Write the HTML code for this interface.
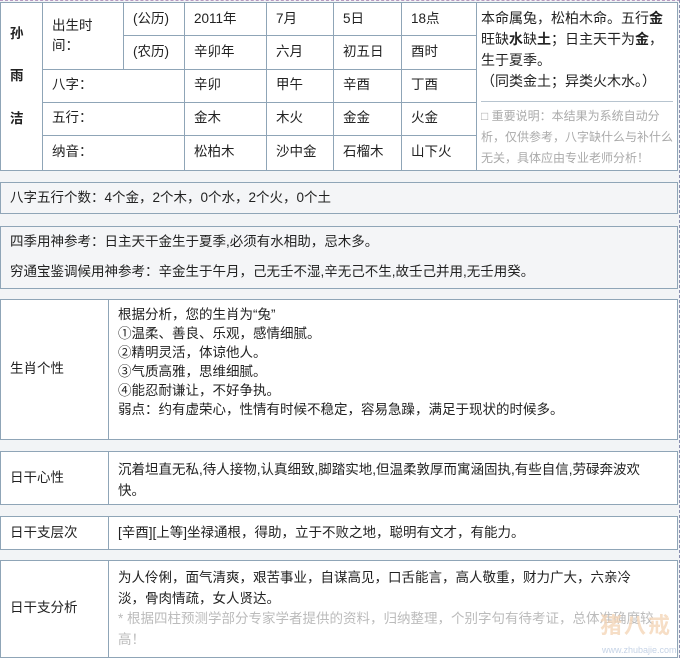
<!DOCTYPE html>
<html><head><meta charset="utf-8"><style>
*{margin:0;padding:0;box-sizing:border-box}
body{width:680px;height:658px;background:#f2f4f6;font-family:"Liberation Sans","Noto Sans CJK SC",sans-serif;font-size:13.5px;color:#222;position:relative;overflow:hidden}
.b{position:absolute;border:1px solid #8fa5b7}
.w{background:#fff}
.g{background:#f4f5f7}
.t{position:absolute;white-space:nowrap;line-height:16px}
.v{position:absolute;background:#8fa5b7;width:1px}
.h{position:absolute;background:#8fa5b7;height:1px}
.gr{color:#aaa}
</style></head><body>
<div style="position:absolute;left:0;top:0;width:680px;border-top:1px dashed #b89ac0"></div>
<div style="position:absolute;right:0;top:0;height:658px;border-right:1px dashed #8a8fb0"></div>
<div class="b w" style="left:0;top:2px;width:678px;height:169px"></div>
<div class="v" style="left:42px;top:2px;height:169px"></div>
<div class="v" style="left:123px;top:2px;height:67px"></div>
<div class="v" style="left:184px;top:2px;height:169px"></div>
<div class="v" style="left:266px;top:2px;height:169px"></div>
<div class="v" style="left:333px;top:2px;height:169px"></div>
<div class="v" style="left:401px;top:2px;height:169px"></div>
<div class="v" style="left:476px;top:2px;height:169px"></div>
<div class="h" style="left:123px;top:35px;width:353px"></div>
<div class="h" style="left:42px;top:69px;width:434px"></div>
<div class="h" style="left:42px;top:102px;width:434px"></div>
<div class="h" style="left:42px;top:135px;width:434px"></div>
<div class="h" style="left:481px;top:101px;width:192px;background:#b7c4cf"></div>
<div class="t" style="left:10px;top:26px;font-weight:bold">孙</div>
<div class="t" style="left:10px;top:68px;font-weight:bold">雨</div>
<div class="t" style="left:10px;top:111px;font-weight:bold">洁</div>
<div class="t" style="left:52px;top:16px;line-height:20px">出生时<br>间：</div>
<div class="t" style="left:133px;top:11px">(公历)</div>
<div class="t" style="left:133px;top:44px">(农历)</div>
<div class="t" style="left:194px;top:11px">2011年</div>
<div class="t" style="left:276px;top:11px">7月</div>
<div class="t" style="left:343px;top:11px">5日</div>
<div class="t" style="left:411px;top:11px">18点</div>
<div class="t" style="left:194px;top:44px">辛卯年</div>
<div class="t" style="left:276px;top:44px">六月</div>
<div class="t" style="left:343px;top:44px">初五日</div>
<div class="t" style="left:411px;top:44px">酉时</div>
<div class="t" style="left:52px;top:77px">八字：</div>
<div class="t" style="left:194px;top:77px">辛卯</div>
<div class="t" style="left:276px;top:77px">甲午</div>
<div class="t" style="left:343px;top:77px">辛酉</div>
<div class="t" style="left:411px;top:77px">丁酉</div>
<div class="t" style="left:52px;top:110px">五行：</div>
<div class="t" style="left:194px;top:110px">金木</div>
<div class="t" style="left:276px;top:110px">木火</div>
<div class="t" style="left:343px;top:110px">金金</div>
<div class="t" style="left:411px;top:110px">火金</div>
<div class="t" style="left:52px;top:144px">纳音：</div>
<div class="t" style="left:194px;top:144px">松柏木</div>
<div class="t" style="left:276px;top:144px">沙中金</div>
<div class="t" style="left:343px;top:144px">石榴木</div>
<div class="t" style="left:411px;top:144px">山下火</div>
<div class="t" style="left:481px;top:8px;line-height:21px;font-size:14px">本命属兔，松柏木命。五行<b>金</b><br>旺缺<b>水</b>缺<b>土</b>；日主天干为<b>金</b>，<br>生于夏季。<br>（同类金土；异类火木水。）</div>
<div class="t gr" style="left:481px;top:106px;font-size:12px;line-height:21px">□ 重要说明：本结果为系统自动分<br>析，仅供参考，八字缺什么与补什么<br>无关，具体应由专业老师分析！</div>
<div class="b g" style="left:0;top:182px;width:678px;height:32px"></div>
<div class="t" style="left:10px;top:190px">八字五行个数：4个金，2个木，0个水，2个火，0个土</div>
<div class="b g" style="left:0;top:226px;width:678px;height:63px"></div>
<div class="t" style="left:10px;top:234px">四季用神参考：日主天干金生于夏季,必须有水相助，忌木多。</div>
<div class="t" style="left:10px;top:264px">穷通宝鉴调候用神参考：辛金生于午月，己无壬不湿,辛无己不生,故壬己并用,无壬用癸。</div>
<div class="b w" style="left:0;top:299px;width:678px;height:141px"></div>
<div class="v" style="left:108px;top:299px;height:141px"></div>
<div class="t" style="left:10px;top:361px">生肖个性</div>
<div class="t" style="left:118px;top:305px;line-height:19px">根据分析，您的生肖为“兔”<br>①温柔、善良、乐观，感情细腻。<br>②精明灵活，体谅他人。<br>③气质高雅，思维细腻。<br>④能忍耐谦让，不好争执。<br>弱点：约有虚荣心，性情有时候不稳定，容易急躁，满足于现状的时候多。</div>
<div class="b w" style="left:0;top:451px;width:678px;height:54px"></div>
<div class="v" style="left:108px;top:451px;height:54px"></div>
<div class="t" style="left:10px;top:470px">日干心性</div>
<div class="t" style="left:118px;top:459px;line-height:21px">沉着坦直无私,待人接物,认真细致,脚踏实地,但温柔敦厚而寓涵固执,有些自信,劳碌奔波欢<br>快。</div>
<div class="b w" style="left:0;top:516px;width:678px;height:34px"></div>
<div class="v" style="left:108px;top:516px;height:34px"></div>
<div class="t" style="left:10px;top:525px">日干支层次</div>
<div class="t" style="left:118px;top:525px">[辛酉][上等]坐禄通根，得助，立于不败之地，聪明有文才，有能力。</div>
<div class="b w" style="left:0;top:560px;width:678px;height:98px"></div>
<div class="v" style="left:108px;top:560px;height:98px"></div>
<div class="t" style="left:10px;top:600px">日干支分析</div>
<div class="t" style="left:118px;top:567px;line-height:21px">为人伶俐，面气清爽，艰苦事业，自谋高见，口舌能言，高人敬重，财力广大，六亲冷<br>淡，骨肉情疏，女人贤达。</div>
<div class="t gr" style="left:118px;top:608px;line-height:21px;color:#bbb">* 根据四柱预测学部分专家学者提供的资料，归纳整理，个别字句有待考证，总体准确度较<br>高！</div>
<div class="t" style="left:600px;top:618px;font-size:22px;color:#f5d6b8;font-weight:bold;letter-spacing:2px;opacity:.8">猪八戒</div>
<div class="t" style="left:602px;top:645px;font-size:9px;color:#c5d3e6;line-height:10px">www.zhubajie.com</div>
</body></html>
